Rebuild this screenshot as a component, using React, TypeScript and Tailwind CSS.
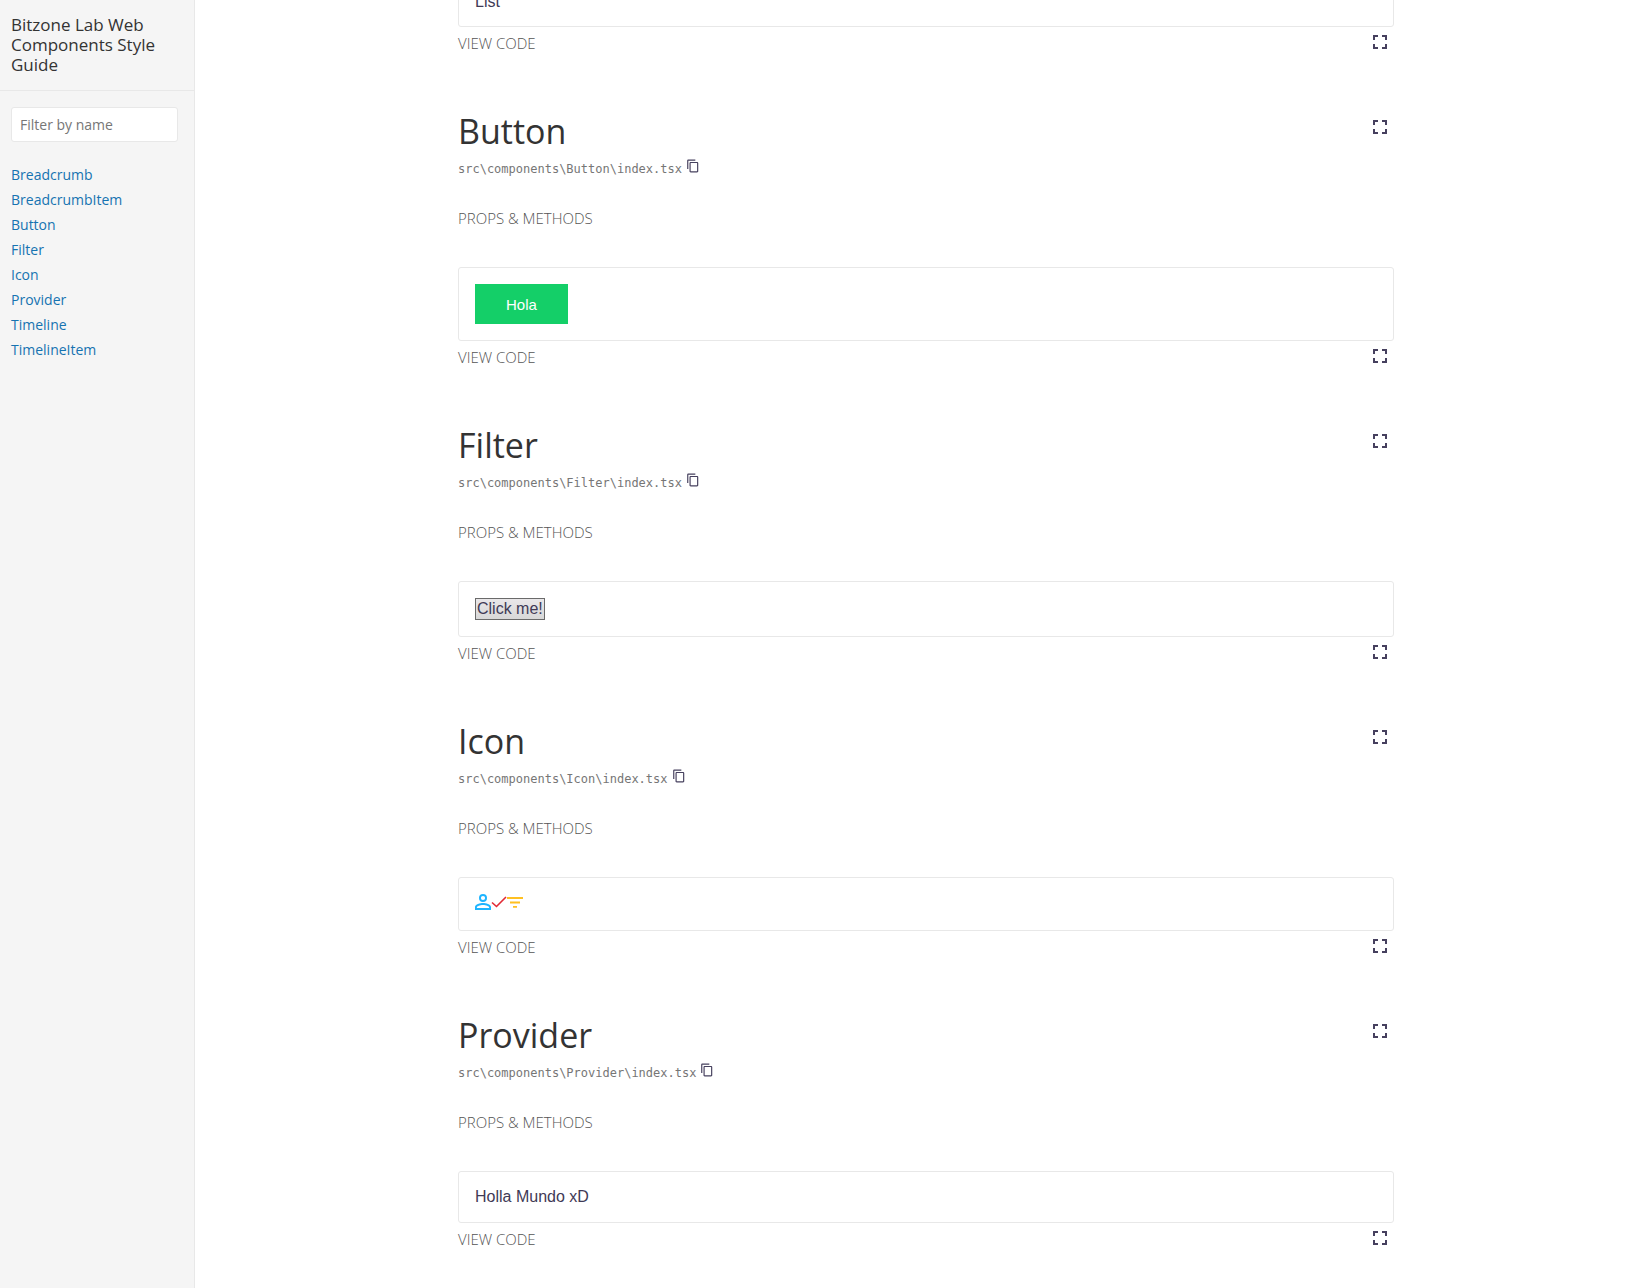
import type { ReactNode } from 'react';

const links = ['Breadcrumb', 'BreadcrumbItem', 'Button', 'Filter', 'Icon', 'Provider', 'Timeline', 'TimelineItem'];

function FullscreenButton({ label }: { label: string }) {
  return (
    <button type="button" aria-label={label} className="flex h-6 w-6 shrink-0 text-[#46405e]">
      <svg viewBox="0 0 24 24" className="h-6 w-6" fill="currentColor">
        <path d="M7 14H5v5h5v-2H7v-3zm-2-4h2V7h3V5H5v5zm12 7h-3v2h5v-5h-2v3zM14 5v2h3v3h2V5h-5z" />
      </svg>
    </button>
  );
}

function CopyIcon() {
  return (
    <svg viewBox="0 0 24 24" className="h-3.5 w-3.5" fill="currentColor">
      <path d="M16 1H4c-1.1 0-2 .9-2 2v14h2V3h12V1zm3 4H8c-1.1 0-2 .9-2 2v14c0 1.1.9 2 2 2h11c1.1 0 2-.9 2-2V7c0-1.1-.9-2-2-2zm0 16H8V7h11v14z" />
    </svg>
  );
}

function Preview({ name, children }: { name: string; children: ReactNode }) {
  return (
    <div>
      <div className="rounded-[3px] border border-[#e8e8e8] p-4 font-['Liberation_Sans',sans-serif] text-base leading-[18px] text-[#3f3a56]">
        {children}
      </div>
      <div className="flex items-start justify-between pt-[3px] pr-0.5">
        <button type="button" className="pt-px text-[15px] leading-6 font-light text-[#555] uppercase">
          View Code
        </button>
        <FullscreenButton label={`Open ${name} example isolated`} />
      </div>
    </div>
  );
}

function Section({ name, children }: { name: string; children: ReactNode }) {
  return (
    <section className="pt-[51px]">
      <header className="flex items-start justify-between pr-0.5">
        <h2 className="text-[34px] leading-[50px] text-[#333]">{name}</h2>
        <div className="pt-[9px]">
          <FullscreenButton label={`Open ${name} isolated`} />
        </div>
      </header>
      <div className="flex h-5 items-start gap-1 pt-[3px] text-[#767676]">
        <span className="pt-0.5 font-['DejaVu_Sans_Mono',monospace] text-[12px] leading-[17px]">{`src\\components\\${name}\\index.tsx`}</span>
        <button type="button" aria-label="Copy to clipboard" className="text-[#46405e]">
          <CopyIcon />
        </button>
      </div>
      <div className="pt-[30px] pb-[37px]">
        <button type="button" className="block text-[15px] leading-6 font-light text-[#555] uppercase">
          Props &amp; methods
        </button>
      </div>
      <Preview name={name}>{children}</Preview>
    </section>
  );
}

export default function App() {
  return (
    <div className="flex h-screen overflow-hidden bg-white font-['Open_Sans',sans-serif]">
      <aside className="mr-[5px] w-[195px] shrink-0 border-r border-[#e8e8e8] bg-[#f5f5f5]">
        <div className="border-b border-[#e8e8e8] px-[11px] py-[15px]">
          <h1 className="text-[17px] leading-5 text-[#333]">Bitzone Lab Web Components Style Guide</h1>
        </div>
        <div className="py-4 pr-4 pl-[11px]">
          <input
            type="text"
            aria-label="Filter by name"
            placeholder="Filter by name"
            className="block h-[35px] w-full rounded-[3px] border border-[#e8e8e8] bg-white px-2 text-[14px] text-[#333] placeholder:text-[#767676]"
          />
        </div>
        <nav className="px-[11px] pt-1">
          <ul>
            {links.map((l) => (
              <li key={l}>
                <a href={`#${l}`} className="block text-[14px] leading-[25px] text-[#1673b1]">
                  {l}
                </a>
              </li>
            ))}
          </ul>
        </nav>
      </aside>
      <main className="flex min-w-0 flex-1 flex-col overflow-hidden">
        <div className="mx-auto -mt-[25px] w-full max-w-[1000px] px-8">
          <Preview name="Breadcrumb">
            <div className="pt-px -mb-px">List</div>
          </Preview>
          <Section name="Button">
            <button type="button" className="block h-10 bg-[#14cf68] px-[31px] pt-0.5 text-[15px] text-white">
              Hola
            </button>
          </Section>
          <Section name="Filter">
            <button
              type="button"
              className="block border border-[#6a6a6a] bg-linear-to-b from-[#e9e7e9] to-[#d8d8d8] px-px leading-5"
            >
              Click me!
            </button>
          </Section>
          <Section name="Icon">
            <div className="flex h-5">
              <svg viewBox="0 0 16 16" className="h-4 w-4" fill="#1eb4ff">
                <path d="M8 0a4 4 0 1 1 0 8 4 4 0 0 1 0-8zm0 1.9a2.1 2.1 0 1 0 0 4.2 2.1 2.1 0 0 0 0-4.2zM8 9c2.7 0 8 1.3 8 4v3H0v-3c0-2.7 5.300-4 8-4zm0 1.900c-3 0-6.100 1.500-6.100 2.100v1.100h12.200V13c0-.6-3.100-2.100-6.100-2.100z" />
              </svg>
              <svg viewBox="0 0 16 16" className="h-4 w-4" fill="none" stroke="#e22a35" strokeWidth="1.6">
                <path d="M1 8.500l4.500 4L15 3" />
              </svg>
              <svg viewBox="0 0 16 16" className="h-4 w-4" fill="#ffc021">
                <path d="M0 3h16v2H0zM3 7.500h10v2H3zM6 12h4v1.800H6z" />
              </svg>
            </div>
          </Section>
          <Section name="Provider">Holla Mundo xD</Section>
        </div>
      </main>
    </div>
  );
}
